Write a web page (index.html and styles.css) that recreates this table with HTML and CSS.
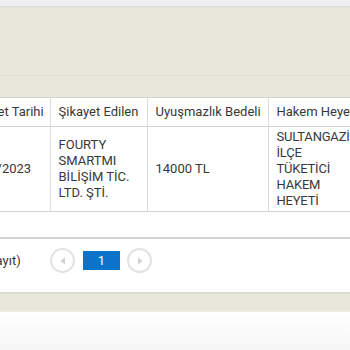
FILE: index.html
```html
<!DOCTYPE html>
<html lang="tr">
<head>
<meta charset="utf-8">
<link rel="stylesheet" href="styles.css">
</head>
<body>
<div class="topstrip"></div>
<div class="filter">
  <div class="filter-top"></div>
  <div class="filter-bottom"></div>
</div>
<div class="results">
  <div class="table-wrap">
    <table class="grid">
      <colgroup>
        <col class="c1"><col class="c2"><col class="c3"><col class="c4">
      </colgroup>
      <thead>
        <tr>
          <th>Şikayet Tarihi</th>
          <th>Şikayet Edilen</th>
          <th>Uyuşmazlık Bedeli</th>
          <th>Hakem Heyeti</th>
        </tr>
      </thead>
      <tbody>
        <tr>
          <td class="date">01/05/2023</td>
          <td>FOURTY<br>SMARTMI<br>BİLİŞİM TİC.<br>LTD. ŞTİ.</td>
          <td>14000 TL</td>
          <td class="hakem">SULTANGAZİ<br>İLÇE<br>TÜKETİCİ<br>HAKEM<br>HEYETİ</td>
        </tr>
      </tbody>
    </table>
  </div>
  <div class="pager">
    <span class="count">(1 kayıt)</span>
    <span class="circle prev"><svg width="10" height="10" viewBox="0 0 10 10"><path d="M7 1.5 L2.5 5 L7 8.5 Z" fill="#cfcfcf"/></svg></span>
    <span class="page">1</span>
    <span class="circle next"><svg width="10" height="10" viewBox="0 0 10 10"><path d="M3 1.5 L7.5 5 L3 8.5 Z" fill="#cfcfcf"/></svg></span>
  </div>
</div>
<div class="band"></div>
<div class="footer"></div>
</body>
</html>
```
FILE: styles.css
```css
html, body {
  margin: 0;
  padding: 0;
  background: #ffffff;
  font-family: Roboto, "Liberation Sans", sans-serif;
  color: #3c3c3c;
  overflow: hidden;
  width: 350px;
  height: 350px;
}
.topstrip {
  height: 6px;
  background: #efeef0;
  border-bottom: 1px solid #dcdcd6;
}
.filter {
  background: #e7e7db;
}
.filter-top {
  height: 68px;
  border-bottom: 1px solid #deded2;
}
.filter-bottom {
  height: 21px;
}
.results {
  background: #ffffff;
}
.table-wrap {
  overflow: hidden;
  height: 139px;
  border-top: 1px solid #d4d4d4;
  border-bottom: 2px solid #d2d2d2;
}
.grid {
  border-collapse: collapse;
  table-layout: fixed;
  width: 459px;
  margin-left: -41px;
  font-size: 13px;
  line-height: 16px;
}
.c1 { width: 91px; }
.c2 { width: 97px; }
.c3 { width: 121px; }
.c4 { width: 150px; }
.grid th {
  font-weight: normal;
  text-align: left;
  padding: 6px 8px 6px 8px;
  border-right: 1px solid #dcdcdc;
  border-bottom: 1px solid #d4d4d4;
  white-space: nowrap;
  color: #383838;
}
.grid td {
  padding: 2px 8px;
  vertical-align: middle;
  border-right: 1px solid #dcdcdc;
  border-bottom: 1px solid #d4d4d4;
  color: #383838;
}
.grid td.date {
  text-indent: -5px;
  white-space: nowrap;
}
.grid td.hakem {
  letter-spacing: -0.2px;
  white-space: nowrap;
}
.pager {
  height: 53px;
  box-sizing: border-box;
  padding-top: 9px;
  display: flex;
  align-items: flex-start;
  font-size: 13px;
  color: #383838;
}
.count {
  margin-left: -26px;
  width: 76px;
  flex: none;
  line-height: 25px;
}
.circle {
  width: 21px;
  height: 21px;
  border: 2px solid #e2e2e2;
  border-radius: 50%;
  display: flex;
  align-items: center;
  justify-content: center;
  flex: none;
  box-sizing: content-box;
}
.page {
  margin: 3px 7px 0 8px;
  width: 37px;
  height: 19px;
  background: #0b73c9;
  color: #ffffff;
  font-size: 13px;
  line-height: 19px;
  text-align: center;
  flex: none;
}
.band {
  height: 17px;
  background: #e7e7db;
  border-top: 2px solid #dadad2;
  border-bottom: 1px solid #ecece4;
}
.footer {
  height: 40px;
  background: linear-gradient(#ffffff, #f6f6f6);
}
```
